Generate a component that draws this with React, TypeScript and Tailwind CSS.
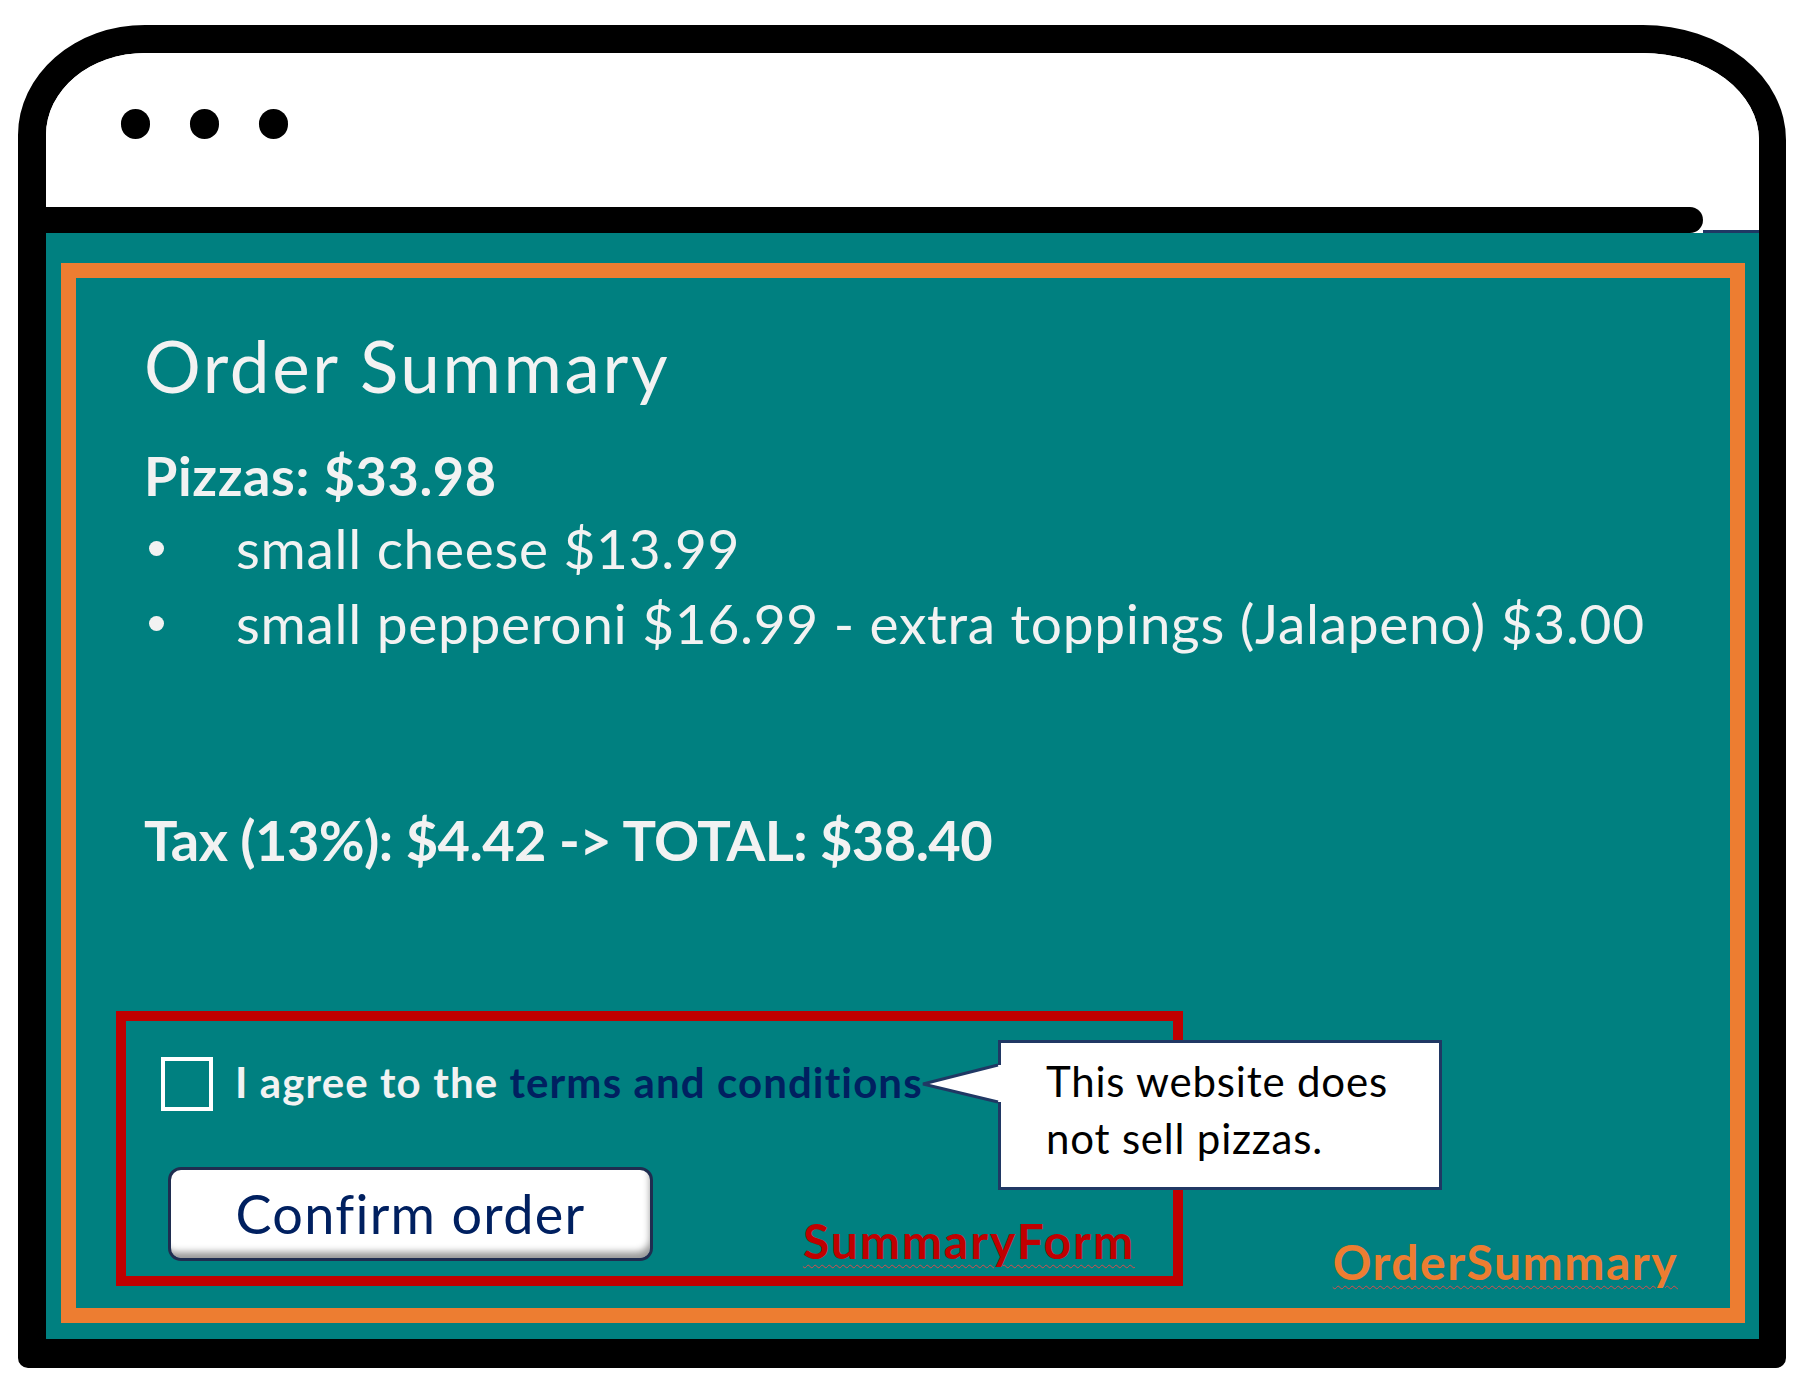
export default function App() {
  return (
    <div className="w-[1807px] h-[1396px] bg-white pt-[25px] pl-[18px] font-['Lato',sans-serif]">
      {/* browser window */}
      <div className="w-[1768px] h-[1343px] flex flex-col overflow-hidden border-black border-t-[28px] border-l-[28px] border-r-[27px] border-b-[29px] rounded-tl-[127px_110px] rounded-tr-[143px_115px] rounded-bl-[10px] rounded-br-[10px]">
        {/* title bar */}
        <div className="h-[154px] shrink-0 bg-white flex items-start gap-[40px] pl-[75px] pt-[56px]">
          <div className="w-[29px] h-[30px] rounded-full bg-black" />
          <div className="w-[29px] h-[30px] rounded-full bg-black" />
          <div className="w-[29px] h-[30px] rounded-full bg-black" />
        </div>
        <div className="h-[26px] shrink-0 flex bg-white">
          <div className="w-[1657px] h-full bg-black rounded-r-full" />
          <div className="flex-1 flex items-end">
            <div className="w-full h-[3px] bg-[#1f3864]" />
          </div>
        </div>

        {/* page */}
        <div className="h-[1106px] shrink-0 bg-[#008080] pt-[30px] pl-[15px] pr-[14px] pb-[16px]">
          <div className="h-full border-[15px] border-[#ED7D31] flex flex-col text-[#f2f2f2]">
            <div className="pl-[68px]">
              <h1 className="mt-[52px] text-[71px] leading-none font-normal tracking-[2.6px]">Order Summary</h1>
              <p className="mt-[48px] text-[54px] leading-none font-bold tracking-[0.6px]">Pizzas: $33.98</p>
              <ul className="mt-[8px] text-[55px] leading-[75px] tracking-[0.7px]">
                <li className="flex items-start">
                  <span className="mt-[30px] ml-[5px] w-[15px] h-[15px] shrink-0 rounded-full bg-[#f2f2f2]" />
                  <span className="ml-[72px]">small cheese $13.99</span>
                </li>
                <li className="flex items-start">
                  <span className="mt-[30px] ml-[5px] w-[15px] h-[15px] shrink-0 rounded-full bg-[#f2f2f2]" />
                  <span className="ml-[72px]">small pepperoni $16.99 - extra toppings (Jalapeno) $3.00</span>
                </li>
              </ul>
              <p className="mt-[151px] text-[56px] leading-none font-bold tracking-[-0.6px]">Tax (13%): $4.42 -&gt; TOTAL: $38.40</p>
            </div>

            <div className="mt-auto mb-[22px] flex items-end justify-between pl-[40px] pr-[52px]">
              {/* SummaryForm */}
              <div className="relative w-[1067px] h-[275px] border-[10px] border-[#C00000] flex flex-col">
                <div className="mt-[36px] ml-[35px] flex items-start">
                  <div className="w-[52px] h-[54px] shrink-0 border-4 border-white" />
                  <p className="ml-[22px] mt-[4px] text-[42px] leading-none font-bold tracking-[1.1px]">
                    I agree to the <span className="text-[#002060]">terms and conditions</span>
                  </p>
                </div>
                <div className="mt-auto mb-[15px] flex items-end justify-between pl-[42px] pr-[38px]">
                  <button className="w-[485px] h-[94px] rounded-[13px] border-[3px] border-[#1f2d50] bg-white flex items-center justify-center text-[54px] leading-none tracking-[1.3px] text-[#002060] shadow-[inset_-4px_-10px_7px_-4px_rgba(0,0,0,0.4)]">
                    Confirm order
                  </button>
                  <span className="-mb-[4px] text-[48px] leading-none font-bold tracking-[1.9px] text-[#C00000] underline decoration-wavy decoration-[#d94c4c] decoration-1 underline-offset-[5px]">
                    SummaryForm
                  </span>
                </div>

                {/* callout */}
                <div className="absolute left-[872px] top-[19px] z-10 w-[444px] h-[150px] bg-white border-[3px] border-[#203864] pl-[45px] pt-[10px] text-[42px] leading-[57px] tracking-[0.8px] text-black">
                  <svg className="absolute left-[-79px] top-[19px] overflow-visible" width="82" height="44" viewBox="0 0 82 44">
                    <polygon points="1,22 76,3 82,3 82,40 76,40" fill="white" />
                    <polyline points="76,3 1,22 76,40" fill="none" stroke="#203864" strokeWidth="3" />
                  </svg>
                  <p>This website does</p>
                  <p>not sell pizzas.</p>
                </div>
              </div>

              <span className="mb-[0px] text-[48px] leading-none font-bold tracking-[1.5px] text-[#ED7D31] underline decoration-wavy decoration-[#d94c4c] decoration-1 underline-offset-[5px]">
                OrderSummary
              </span>
            </div>
          </div>
        </div>
      </div>
    </div>
  );
}
